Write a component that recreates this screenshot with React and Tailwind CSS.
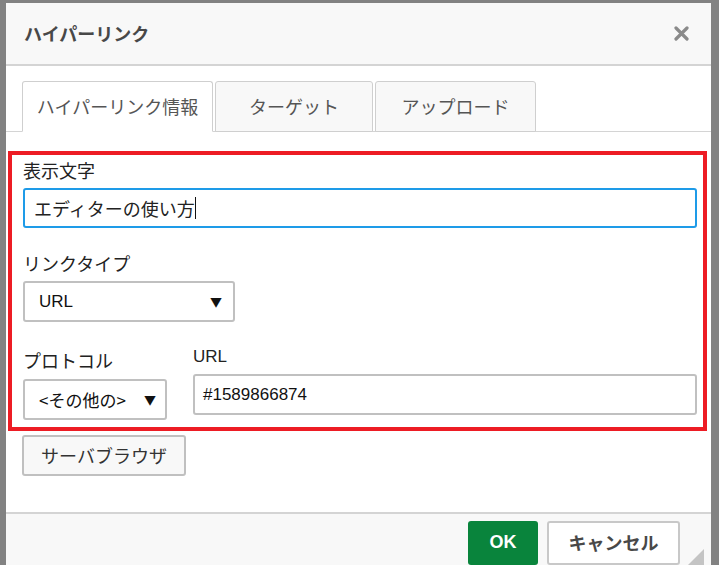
import React from 'react';

const jp = { fontFamily: '"Noto Sans CJK JP", "Liberation Sans", sans-serif' };
const latin = { fontFamily: '"Liberation Sans", "Noto Sans CJK JP", sans-serif' };

const Tab = ({ label, active, width }) => (
  <div
    className={`h-[51px] flex items-center justify-center border border-[#cfcfcf] rounded-t-[3px] text-[18px] text-[#555] ${active ? 'bg-white border-b-white' : 'bg-[#f8f8f8]'}`}
    style={{ width }}
  >
    {label}
  </div>
);

const App = () => {
  return (
    <div className="w-[719px] h-[565px] bg-[#828282] overflow-hidden relative" style={jp}>
      <div className="ml-[6px] mt-[3px] w-[705px] h-[562px] bg-white flex flex-col">
        {/* header */}
        <div className="h-[64px] bg-[#f8f8f8] border-b-2 border-[#d4d4d4] flex items-center justify-between pl-[18px] pr-[22px]">
          <span className="text-[18px] font-bold text-[#484848]">ハイパーリンク</span>
          <svg width="15" height="15" viewBox="0 0 15 15">
            <path d="M2 2 L13 13 M13 2 L2 13" stroke="#8a8a8a" strokeWidth="3.2" strokeLinecap="round" />
          </svg>
        </div>

        {/* tabs */}
        <div className="mt-[15px] flex gap-[2px] pl-[16px] border-b border-[#d4d4d4] h-[51px] items-end">
          <div className="flex gap-[2px] -mb-px">
            <Tab label="ハイパーリンク情報" active width={191} />
            <Tab label="ターゲット" width={158} />
            <Tab label="アップロード" width={161} />
          </div>
        </div>

        {/* red highlighted area */}
        <div className="mt-[19px] ml-[2px] w-[699px] h-[284px] border-4 border-[#ed1c24] pl-[11px] pr-[6px]">
          <div className="mt-[3px] h-[24px] leading-[24px] text-[18px] text-[#222]">表示文字</div>
          <div className="mt-[6px] h-[40px] border-2 border-[#1e9be8] rounded-[3px] flex items-center pl-[9px] text-[18px] text-[#222]">
            エディターの使い方<span className="w-px h-[22px] bg-[#111]" />
          </div>

          <div className="mt-[23px] h-[24px] leading-[24px] text-[18px] text-[#222]">リンクタイプ</div>
          <div className="mt-[6px] w-[212px] h-[41px] border-2 border-[#c0c0c0] rounded-[3px] flex items-center justify-between pl-[14px] pr-[11px] text-[17px] text-[#111]">
            <span style={latin}>URL</span>
            <span className="text-[12px]">▼</span>
          </div>

          <div className="flex mt-[23px]">
            <div className="w-[170px]">
              <div className="mt-[3px] h-[24px] leading-[24px] text-[18px] text-[#222]">プロトコル</div>
              <div className="mt-[7px] w-[144px] h-[41px] border-2 border-[#c0c0c0] rounded-[3px] flex items-center justify-between pl-[14px] pr-[9px] text-[17px] text-[#111]">
                <span>&lt;その他の&gt;</span>
                <span className="text-[12px]">▼</span>
              </div>
            </div>
            <div className="flex-1">
              <div className="h-[24px] leading-[24px] text-[17px] text-[#222]" style={latin}>URL</div>
              <div className="mt-[5px] h-[41px] border-2 border-[#c0c0c0] rounded-[3px] flex items-center pl-[8px] text-[17px] text-[#111]" style={latin}>
                #1589866874
              </div>
            </div>
          </div>
        </div>

        <div className="mt-[4px] ml-[16px] w-[164px] h-[41px] bg-[#f8f8f8] border-2 border-[#c0c0c0] rounded-[3px] flex items-center justify-center text-[18px] text-[#333]">
          サーバブラウザ
        </div>

        {/* footer */}
        <div className="mt-[36px] flex-1 bg-[#f8f8f8] border-t-2 border-[#d4d4d4] relative">
          <div className="flex justify-end gap-[9px] pr-[31px] pt-[7px]">
            <div className="w-[70px] h-[44px] bg-[#09843c] rounded-[3px] flex items-center justify-center text-white font-bold text-[18px]" style={latin}>
              OK
            </div>
            <div className="w-[133px] h-[44px] bg-white border-2 border-[#c8c8c8] rounded-[3px] flex items-center justify-center text-[#484848] font-bold text-[18px]">
              キャンセル
            </div>
          </div>
          <svg className="absolute right-[7px] bottom-0" width="16" height="16" viewBox="0 0 16 16">
            <polygon points="16,0 16,16 0,16" fill="#c4c4c4" />
          </svg>
        </div>
      </div>
    </div>
  );
};

export default App;
